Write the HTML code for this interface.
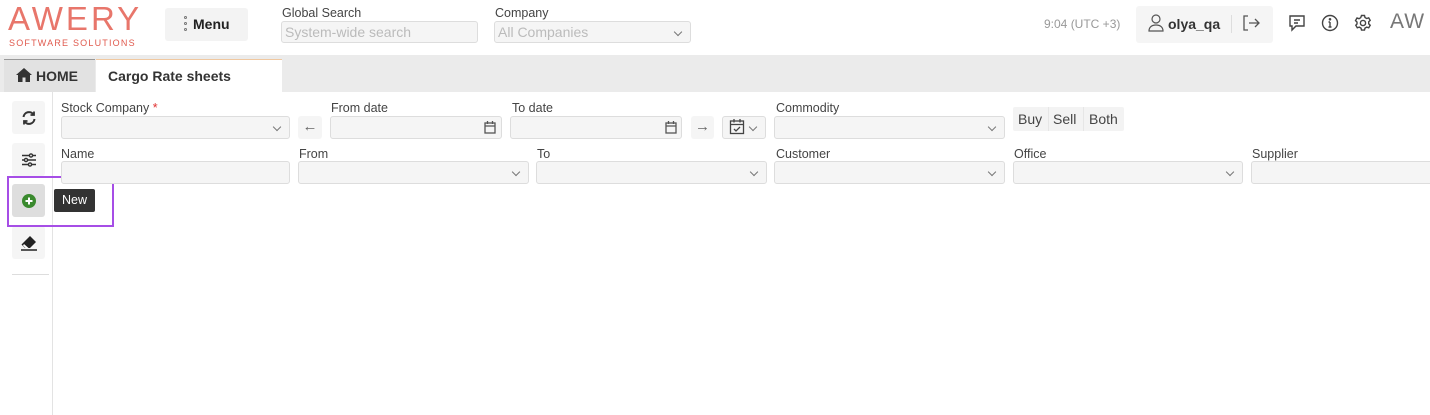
<!DOCTYPE html>
<html><head><meta charset="utf-8"><style>
*{box-sizing:border-box;margin:0;padding:0}
body{width:1430px;height:415px;background:#fff;font-family:"Liberation Sans",Arial,sans-serif;position:relative;overflow:hidden;color:#333}
.a{position:absolute}
.lbl{position:absolute;font-size:12.5px;color:#444}
.inp{position:absolute;height:23px;background:#f5f5f5;border:1px solid #ddd;border-radius:3px}
.dd:after{content:"";position:absolute;right:9px;top:7px;width:5px;height:5px;border-right:1px solid #777;border-bottom:1px solid #777;transform:rotate(45deg)}
.sb{position:absolute;left:12px;width:33px;height:33px;background:#f5f5f5;border-radius:3px;display:flex;align-items:center;justify-content:center}
</style></head><body>
<!-- logo -->
<div class="a" style="left:8px;top:1px;font-size:33px;letter-spacing:3px;color:#e8766b;line-height:36px">AWERY</div>
<div class="a" style="left:9px;top:38px;font-size:9px;letter-spacing:1.2px;color:#e05a4e">SOFTWARE SOLUTIONS</div>
<div class="a" style="left:165px;top:8px;width:83px;height:33px;background:#f3f3f3;border-radius:3px;font-size:14px;font-weight:bold;color:#222;line-height:33px;padding-left:28px">Menu</div>
<div class="a" style="left:184px;top:16px;width:3px;height:3px;border:1px solid #777;border-radius:50%"></div>
<div class="a" style="left:184px;top:22px;width:3px;height:3px;border:1px solid #777;border-radius:50%"></div>
<div class="a" style="left:184px;top:28px;width:3px;height:3px;border:1px solid #777;border-radius:50%"></div>
<div class="lbl" style="left:282px;top:6px">Global Search</div>
<div class="inp" style="left:281px;top:21px;width:197px;height:22px;font-size:14px;color:#bbb;padding-left:3px;line-height:20px">System-wide search</div>
<div class="lbl" style="left:495px;top:6px">Company</div>
<div class="inp dd" style="left:494px;top:21px;width:197px;height:22px;font-size:14px;color:#bbb;padding-left:3px;line-height:20px">All Companies</div>
<div class="a" style="left:1044px;top:17px;font-size:12px;color:#999">9:04 (UTC +3)</div>
<div class="a" style="left:1136px;top:6px;width:137px;height:37px;background:#f5f5f5;border-radius:3px"></div>
<svg class="a" style="left:1148px;top:14px" width="16" height="18" viewBox="0 0 16 18" fill="none" stroke="#555" stroke-width="1.2"><circle cx="8" cy="5" r="4"/><path d="M1 17c0-4 3-6 7-6s7 2 7 6z"/></svg>
<div class="a" style="left:1168px;top:16px;font-size:14px;font-weight:bold;color:#333">olya_qa</div>
<div class="a" style="left:1231px;top:15px;width:1px;height:18px;background:#ddd"></div>
<svg class="a" style="left:1242px;top:15px" width="18" height="16" viewBox="0 0 18 16" fill="none" stroke="#555" stroke-width="1.3"><path d="M6 1H2v14h4M7 8h10M13 4l4 4-4 4"/></svg>
<svg class="a" style="left:1288px;top:14px" width="18" height="18" viewBox="0 0 18 18" fill="none" stroke="#444" stroke-width="1.4"><path d="M2 2h14v10H8l-4 4v-4H2z"/><path d="M6 6h6M6 9h4"/></svg>
<svg class="a" style="left:1321px;top:14px" width="18" height="18" viewBox="0 0 18 18" fill="none" stroke="#444" stroke-width="1.4"><circle cx="9" cy="9" r="7.5"/><path d="M9 8v5M7.5 13h3M7.5 8H9"/><circle cx="9" cy="5.3" r=".6" fill="#444"/></svg>
<svg class="a" style="left:1354px;top:14px" width="18" height="18" viewBox="0 0 18 18" fill="none" stroke="#444" stroke-width="1.4"><circle cx="9" cy="9" r="2.6"/><path d="M7.5 1.5h3l.5 2 1.7 1 2-.7 1.5 2.6-1.5 1.4v2l1.5 1.4-1.5 2.6-2-.7-1.7 1-.5 2h-3l-.5-2-1.7-1-2 .7-1.5-2.6L3 10V8L1.5 6.6 3 4l2 .7 1.7-1z"/></svg>
<div class="a" style="left:1390px;top:10px;font-size:21px;color:#777;letter-spacing:1px">AW</div>
<!-- tab bar -->
<div class="a" style="left:0;top:55px;width:1430px;height:37px;background:#ebebeb"></div>
<div class="a" style="left:4px;top:59px;width:91px;height:33px;background:#e2e2e2;border-top:1px solid #999"></div>
<svg class="a" style="left:16px;top:68px" width="16" height="14" viewBox="0 0 16 14"><path d="M8 0L0 7h2v7h4.5V9.5h3V14H14V7h2z" fill="#333"/></svg>
<div class="a" style="left:36px;top:68px;font-size:14px;font-weight:bold;color:#333">HOME</div>
<div class="a" style="left:96px;top:59px;width:186px;height:34px;background:#fff;border-top:1px solid #f0c8a0"></div>
<div class="a" style="left:108px;top:68px;font-size:14px;font-weight:bold;color:#333">Cargo Rate sheets</div>
<!-- sidebar -->
<div class="a" style="left:52px;top:92px;width:1px;height:323px;background:#e3e3e3"></div>
<div class="sb" style="top:101px"><svg width="16" height="16" viewBox="0 0 16 16" fill="none" stroke="#333" stroke-width="2"><path d="M2.5 7a5.5 5.5 0 0 1 10-2.5M13.5 9a5.5 5.5 0 0 1-10 2.5"/><path d="M13 1.5v3.5H9.5M3 14.5V11h3.5" stroke-width="1.8"/></svg></div>
<div class="sb" style="top:143px"><svg width="16" height="16" viewBox="0 0 16 16" fill="none" stroke="#333" stroke-width="1.4"><path d="M1 3.5h14M1 8h14M1 12.5h14"/><circle cx="10" cy="3.5" r="1.6" fill="#f5f5f5"/><circle cx="5" cy="8" r="1.6" fill="#f5f5f5"/><circle cx="9" cy="12.5" r="1.6" fill="#f5f5f5"/></svg></div>
<div class="sb" style="top:184px;background:#dedede"><svg width="16" height="16" viewBox="0 0 16 16"><circle cx="8" cy="8" r="7" fill="#3a8a2e"/><path d="M8 4.5v7M4.5 8h7" stroke="#fff" stroke-width="2"/></svg></div>
<div class="sb" style="top:226px"><svg width="18" height="16" viewBox="0 0 18 16"><path d="M10 1l6 6-6 6H5L1.5 9.5z" fill="#222"/><path d="M4 9l4.5 4H5.5L3 10.5z" fill="#fff"/><path d="M1 15h16" stroke="#222" stroke-width="1.5"/></svg></div>
<div class="a" style="left:12px;top:274px;width:37px;height:1px;background:#ddd"></div>
<div class="a" style="left:54px;top:189px;width:41px;height:23px;background:#333;border-radius:2px;color:#fff;font-size:12.5px;line-height:23px;text-align:center">New</div>
<div class="a" style="left:7px;top:176px;width:107px;height:51px;border:2px solid #a64ee6"></div>
<!-- row1 -->
<div class="lbl" style="left:61px;top:101px">Stock Company <span style="color:#e03030">*</span></div>
<div class="inp dd" style="left:61px;top:116px;width:229px"></div>
<div class="a" style="left:298px;top:116px;width:24px;height:23px;background:#f5f5f5;border-radius:3px;text-align:center;font-size:15px;color:#666;line-height:22px">←</div>
<div class="lbl" style="left:331px;top:101px">From date</div>
<div class="inp" style="left:330px;top:116px;width:172px"></div>
<div class="lbl" style="left:512px;top:101px">To date</div>
<div class="inp" style="left:510px;top:116px;width:172px"></div>
<svg class="a" style="left:484px;top:121px" width="12" height="13" viewBox="0 0 12 13" fill="none" stroke="#555" stroke-width="1.3"><rect x="1" y="2" width="10" height="10"/><path d="M1 5h10M3.5 0v3M8.5 0v3"/></svg>
<svg class="a" style="left:665px;top:121px" width="12" height="13" viewBox="0 0 12 13" fill="none" stroke="#555" stroke-width="1.3"><rect x="1" y="2" width="10" height="10"/><path d="M1 5h10M3.5 0v3M8.5 0v3"/></svg>
<div class="a" style="left:691px;top:116px;width:23px;height:23px;background:#f5f5f5;border-radius:3px;text-align:center;font-size:15px;color:#666;line-height:22px">→</div>
<div class="inp dd" style="left:722px;top:116px;width:44px"></div>
<svg class="a" style="left:729px;top:118px" width="16" height="17" viewBox="0 0 16 17" fill="none" stroke="#444" stroke-width="1.3"><rect x="1.5" y="3" width="13" height="12.5"/><path d="M1.5 6.5h13M5 1v3.5M11 1v3.5M5 11l2 2 4-4"/></svg>
<div class="lbl" style="left:776px;top:101px">Commodity</div>
<div class="inp dd" style="left:774px;top:116px;width:231px"></div>
<div class="a" style="left:1013px;top:107px;width:111px;height:24px;background:#f3f3f3;border-radius:2px;font-size:14px;color:#444;line-height:24px"><span style="position:absolute;left:5px">Buy</span><span style="position:absolute;left:40px">Sell</span><span style="position:absolute;left:76px">Both</span><span style="position:absolute;left:35px;top:0;width:1px;height:24px;background:#e6e6e6"></span><span style="position:absolute;left:70px;top:0;width:1px;height:24px;background:#e6e6e6"></span></div>
<!-- row2 -->
<div class="lbl" style="left:61px;top:147px">Name</div>
<div class="inp" style="left:61px;top:161px;width:229px"></div>
<div class="lbl" style="left:299px;top:147px">From</div>
<div class="inp dd" style="left:298px;top:161px;width:231px"></div>
<div class="lbl" style="left:537px;top:147px">To</div>
<div class="inp dd" style="left:536px;top:161px;width:231px"></div>
<div class="lbl" style="left:776px;top:147px">Customer</div>
<div class="inp dd" style="left:774px;top:161px;width:231px"></div>
<div class="lbl" style="left:1014px;top:147px">Office</div>
<div class="inp dd" style="left:1013px;top:161px;width:230px"></div>
<div class="lbl" style="left:1252px;top:147px">Supplier</div>
<div class="inp" style="left:1251px;top:161px;width:185px"></div>
</body></html>
